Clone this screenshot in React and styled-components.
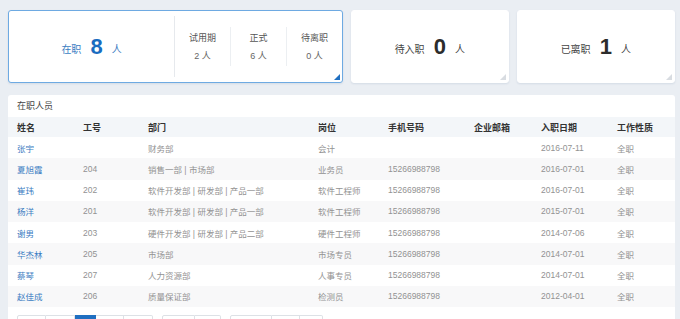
import React from 'react'
import styled, { createGlobalStyle } from 'styled-components'

const GlobalStyle = createGlobalStyle`
  html, body {
    margin: 0;
    padding: 0;
    background: #eaeef3;
    font-family: "Liberation Sans", "Noto Sans CJK SC", sans-serif;
  }
`

const COLS = '66px 65px 170px 70px 86px 67px 76px 1fr'

const people = [
  { name: '张宇', no: '', dept: '财务部', post: '会计', phone: '', mail: '', date: '2016-07-11', kind: '全职' },
  { name: '夏旭霞', no: '204', dept: '销售一部 | 市场部', post: '业务员', phone: '15266988798', mail: '', date: '2016-07-01', kind: '全职' },
  { name: '崔玮', no: '202', dept: '软件开发部 | 研发部 | 产品一部', post: '软件工程师', phone: '15266988798', mail: '', date: '2016-07-01', kind: '全职' },
  { name: '杨洋', no: '201', dept: '软件开发部 | 研发部 | 产品一部', post: '软件工程师', phone: '15266988798', mail: '', date: '2015-07-01', kind: '全职' },
  { name: '谢男', no: '203', dept: '硬件开发部 | 研发部 | 产品二部', post: '硬件工程师', phone: '15266988798', mail: '', date: '2014-07-06', kind: '全职' },
  { name: '华杰林', no: '205', dept: '市场部', post: '市场专员', phone: '15266988798', mail: '', date: '2014-07-01', kind: '全职' },
  { name: '蔡琴', no: '207', dept: '人力资源部', post: '人事专员', phone: '15266988798', mail: '', date: '2014-07-01', kind: '全职' },
  { name: '赵佳成', no: '206', dept: '质量保证部', post: '检测员', phone: '15266988798', mail: '', date: '2012-04-01', kind: '全职' },
]

const subStats = [
  { label: '试用期', value: '2 人' },
  { label: '正式', value: '6 人' },
  { label: '待离职', value: '0 人' },
]

const pageGroups = [
  [29, 29, 21, 28, 29],
  [33, 26],
  [42, 28, 23],
]

const App = () => {
  return (
    <Page>
      <GlobalStyle />
      <Cards>
        <Card active>
          <MainStat>
            <StatLabel active>在职</StatLabel>
            <BigNum active>8</BigNum>
            <StatLabel active>人</StatLabel>
          </MainStat>
          <SubStats>
            {subStats.map((s, i) => (
              <SubStat key={s.label} first={i === 0}>
                <SubLabel>{s.label}</SubLabel>
                <SubValue>{s.value}</SubValue>
              </SubStat>
            ))}
          </SubStats>
          <Corner active />
        </Card>
        <Card>
          <MainStat>
            <StatLabel>待入职</StatLabel>
            <BigNum>0</BigNum>
            <StatLabel>人</StatLabel>
          </MainStat>
          <Corner />
        </Card>
        <Card>
          <MainStat>
            <StatLabel>已离职</StatLabel>
            <BigNum>1</BigNum>
            <StatLabel>人</StatLabel>
          </MainStat>
          <Corner />
        </Card>
      </Cards>

      <Panel>
        <PanelTitle>在职人员</PanelTitle>
        <HeadRow>
          {['姓名', '工号', '部门', '岗位', '手机号码', '企业邮箱', '入职日期', '工作性质'].map(h => (
            <HeadCell key={h}>{h}</HeadCell>
          ))}
        </HeadRow>
        {people.map((p, i) => (
          <Row key={p.name} striped={i % 2 === 1}>
            <NameCell>{p.name}</NameCell>
            <Cell>{p.no}</Cell>
            <Cell>{p.dept}</Cell>
            <Cell>{p.post}</Cell>
            <Cell>{p.phone}</Cell>
            <Cell>{p.mail}</Cell>
            <Cell>{p.date}</Cell>
            <Cell>{p.kind}</Cell>
          </Row>
        ))}
        <Pager>
          {pageGroups.map((g, gi) => (
            <PageGroup key={gi}>
              {g.map((w, i) => (
                <PageBtn key={i} style={{ width: w }} current={gi === 0 && i === 2} />
              ))}
            </PageGroup>
          ))}
        </Pager>
      </Panel>
    </Page>
  )
}
export default App

const Page = styled.div`
  padding: 10px 5px 0 8px;
  height: 319px;
  box-sizing: border-box;
  overflow: hidden;
`

const Cards = styled.div`
  display: grid;
  grid-template-columns: 335px 1fr 1fr;
  column-gap: 7.5px;
  height: 73px;
`

const Card = styled.div`
  position: relative;
  display: flex;
  background: #fff;
  border-radius: 3px;
  box-sizing: border-box;
  border: 1px solid ${({ active }) => (active ? '#6eaae2' : '#fff')};
  box-shadow: 0 1px 2px rgba(60, 90, 130, 0.12);
`

const Corner = styled.i`
  position: absolute;
  right: 2px;
  bottom: 2px;
  width: 0;
  height: 0;
  border-style: solid;
  border-width: 0 0 6px 6px;
  border-color: transparent transparent
    ${({ active }) => (active ? '#1f6fc1' : '#d8dce1')} transparent;
`

const MainStat = styled.div`
  flex: 1;
  display: flex;
  align-items: center;
  justify-content: center;
  gap: 9px;
`

const StatLabel = styled.span`
  font-size: 10px;
  color: ${({ active }) => (active ? '#3a7cc2' : '#444')};
  margin-top: 3px;
`

const BigNum = styled.span`
  font-size: 22px;
  font-weight: bold;
  color: ${({ active }) => (active ? '#1a6cc0' : '#2c2c2c')};
`

const SubStats = styled.div`
  width: 167px;
  display: flex;
  align-items: center;
  border-left: 1px solid #e6e9ed;
  margin: 5px 0;
`

const SubStat = styled.div`
  flex: 1;
  display: flex;
  flex-direction: column;
  align-items: center;
  gap: 5px;
  padding: 4px 0;
  border-left: ${({ first }) => (first ? 'none' : '1px solid #eceff2')};
`

const SubLabel = styled.span`
  font-size: 9px;
  color: #555;
`

const SubValue = styled.span`
  font-size: 9px;
  color: #666;
`

const Panel = styled.div`
  margin-top: 12px;
  background: #fff;
  border-radius: 3px 3px 0 0;
  padding-bottom: 20px;
`

const PanelTitle = styled.div`
  height: 22px;
  line-height: 22px;
  padding-left: 9px;
  font-size: 9px;
  color: #444;
`

const HeadRow = styled.div`
  display: grid;
  grid-template-columns: ${COLS};
  align-items: center;
  height: 20px;
  padding-left: 9px;
  background: #f3f6f9;
`

const HeadCell = styled.div`
  font-size: 9px;
  font-weight: bold;
  color: #333;
`

const Row = styled.div`
  display: grid;
  grid-template-columns: ${COLS};
  align-items: center;
  height: 21.25px;
  padding-left: 9px;
  background: ${({ striped }) => (striped ? '#f8f8f9' : '#fff')};
`

const Cell = styled.div`
  font-size: 8.5px;
  color: #929292;
  white-space: nowrap;
`

const NameCell = styled(Cell)`
  color: #3a7cc2;
`

const Pager = styled.div`
  display: flex;
  gap: 8px;
  padding: 8px 0 0 9px;
`

const PageGroup = styled.div`
  display: flex;
  & + & {
    margin-left: 1px;
  }
`

const PageBtn = styled.span`
  height: 20px;
  box-sizing: border-box;
  border: 1px solid ${({ current }) => (current ? '#1f6fc1' : '#dde1e6')};
  background: ${({ current }) => (current ? '#1f6fc1' : '#fff')};
  & + & {
    border-left: none;
  }
  &:first-child {
    border-radius: 2px 0 0 2px;
  }
  &:last-child {
    border-radius: 0 2px 2px 0;
  }
`
